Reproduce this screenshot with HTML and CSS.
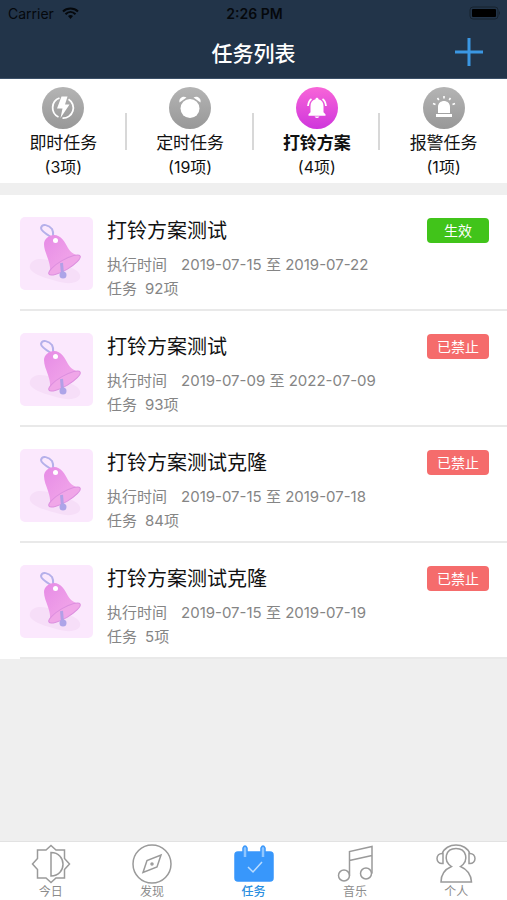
FILE: index.html
```html
<!DOCTYPE html>
<html lang="zh-CN">
<head>
<meta charset="utf-8">
<meta name="viewport" content="width=device-width, initial-scale=1">
<title>任务列表</title>
<link rel="stylesheet" href="styles.css">
</head>
<body>
<svg class="defs" aria-hidden="true">
  <defs>
    <linearGradient id="gray" x1="0" y1="0" x2="0" y2="1"><stop offset="0" stop-color="#b4b4b4"/><stop offset="1" stop-color="#989898"/></linearGradient>
    <linearGradient id="pink" x1="0" y1="0" x2="0" y2="1"><stop offset="0" stop-color="#f865d8"/><stop offset="1" stop-color="#cf36dc"/></linearGradient>
    <linearGradient id="bellfill" x1="0" y1="0" x2="1" y2="1"><stop offset="0" stop-color="#e68be6"/><stop offset="1" stop-color="#f5aeea"/></linearGradient>
    <symbol id="bell" viewBox="0 0 73 73">
      <path d="M10 48c3-8 14-7 24-3s24 6 26 13-9 10-20 7S7 57 10 48z" fill="#f6def8"/>
      <path d="M31 20c-5-3-10-6-10-9 1-5 8-3 11 1 2 4 1 6 1 8" fill="none" stroke="#b5b0ea" stroke-width="2"/>
      <path d="M24 27c0-5 5-9 10-9 7 0 11 7 14 13 3 5 7 7 12 8-2 6-8 10-15 13.500S31 57.500 29 57c2-4 1-9-1-15s-4-10-4-15z" fill="url(#bellfill)"/>
      <ellipse cx="44.500" cy="48" rx="18" ry="5" transform="rotate(-30 44.500 48)" fill="#f0a6e8" stroke="#dc8fdf"/>
      <path d="M41.500 46l1 11" stroke="#b29fe6" stroke-width="3"/>
      <circle cx="43" cy="58" r="3.500" fill="#ada4e8"/>
      <circle cx="35.500" cy="23.500" r="2.500" fill="#fff"/>
    </symbol>
  </defs>
</svg>

<header class="header">
  <div class="status">
    <span class="carrier">Carrier
      <svg width="17" height="12" viewBox="0 0 17 12" fill="none" stroke="#05080c" stroke-width="2"><path d="M1 4.500c4-4 11-4 15 0M3.500 7.300c3-3 7-3 10 0"/><path d="M6 9c1.500-1.300 3.500-1.300 5 0l-2.500 3z" fill="#05080c" stroke="none"/></svg>
    </span>
    <span class="clock">2:26 PM</span>
    <svg class="battery" width="32" height="14" viewBox="0 0 32 14"><rect x="1" y="1" width="28" height="12" rx="3" fill="none" stroke="#17232f"/><rect x="3" y="3" width="24" height="8" rx="1" fill="#000"/><path d="M30 5q2 2 0 4z" fill="#17232f"/></svg>
  </div>
  <div class="titlebar">
    <h1 class="title">任务列表</h1>
    <button class="add" type="button" aria-label="新增任务"><svg width="28" height="28" viewBox="0 0 28 28"><path d="M14 0v28M0 14h28" stroke="#3b97e3" stroke-width="3"/></svg></button>
  </div>
</header>

<nav class="kinds" aria-label="任务类型">
  <button class="kind" type="button">
    <svg class="kind-icon" viewBox="0 0 42 42"><circle cx="21" cy="21" r="21" fill="url(#gray)"/><path d="M17.500 11a10.300 10.300 0 0 0-1 19M26.500 12.200a10.300 10.300 0 0 1-6 19" fill="none" stroke="#fff" stroke-width="1.800"/><path d="M19.500 9.500h6l-2.500 8h4.500L18.500 31l2-9.500h-5.500z" fill="#fff"/></svg>
    <span class="kind-name">即时任务</span><span class="kind-count">(3项)</span>
  </button>
  <button class="kind" type="button">
    <svg class="kind-icon" viewBox="0 0 42 42"><circle cx="21" cy="21" r="21" fill="url(#gray)"/><circle cx="21" cy="21.500" r="9.500" fill="#fff"/><path d="M10.500 15.500c-1-4 3-7 7-5zM31.500 15.500c1-4-3-7-7-5z" fill="#fff"/></svg>
    <span class="kind-name">定时任务</span><span class="kind-count">(19项)</span>
  </button>
  <button class="kind active" type="button" aria-current="true">
    <svg class="kind-icon" viewBox="0 0 42 42"><circle cx="21" cy="21" r="21" fill="url(#pink)"/><path d="M19.500 12.200c0-2 3-2 3 0 3.500 1 5 3.500 5 7v6l2 2v1.500h-17v-1.500l2-2v-6c0-3.500 1.500-6 5-7z" fill="#fff"/><path d="M18.500 29.500h5q-2.500 3-5 0z" fill="#fff"/><path d="M15.500 12q-3 2-3.500 7M26.500 12q3 2 3.500 7" fill="none" stroke="#fff" stroke-width="1.800"/></svg>
    <span class="kind-name">打铃方案</span><span class="kind-count">(4项)</span>
  </button>
  <button class="kind" type="button">
    <svg class="kind-icon" viewBox="0 0 42 42"><circle cx="21" cy="21" r="21" fill="url(#gray)"/><path d="M15 26v-6c0-8 12-8 12 0v6zM13 27h16v3H13z" fill="#fff"/><path d="M21 9v2.500M14.500 11l1.300 2M27.500 11l-1.300 2M10 16.500l2.500 1M32 16.500l-2.500 1" stroke="#fff" stroke-width="1.600"/></svg>
    <span class="kind-name">报警任务</span><span class="kind-count">(1项)</span>
  </button>
</nav>

<main>
  <ul class="plans">
    <li class="plan">
      <svg class="thumb"><use href="#bell"/></svg>
      <div class="info">
        <h2 class="plan-name">打铃方案测试</h2>
        <p class="meta"><span class="label">执行时间</span>2019-07-15 至 2019-07-22</p>
        <p class="meta"><span class="label short">任务</span>92项</p>
      </div>
      <span class="badge on">生效</span>
    </li>
    <li class="plan">
      <svg class="thumb"><use href="#bell"/></svg>
      <div class="info">
        <h2 class="plan-name">打铃方案测试</h2>
        <p class="meta"><span class="label">执行时间</span>2019-07-09 至 2022-07-09</p>
        <p class="meta"><span class="label short">任务</span>93项</p>
      </div>
      <span class="badge">已禁止</span>
    </li>
    <li class="plan">
      <svg class="thumb"><use href="#bell"/></svg>
      <div class="info">
        <h2 class="plan-name">打铃方案测试克隆</h2>
        <p class="meta"><span class="label">执行时间</span>2019-07-15 至 2019-07-18</p>
        <p class="meta"><span class="label short">任务</span>84项</p>
      </div>
      <span class="badge">已禁止</span>
    </li>
    <li class="plan">
      <svg class="thumb"><use href="#bell"/></svg>
      <div class="info">
        <h2 class="plan-name">打铃方案测试克隆</h2>
        <p class="meta"><span class="label">执行时间</span>2019-07-15 至 2019-07-19</p>
        <p class="meta"><span class="label short">任务</span>5项</p>
      </div>
      <span class="badge">已禁止</span>
    </li>
  </ul>
</main>

<nav class="tabbar" aria-label="主导航">
  <a class="tab" href="#today">
    <svg class="tab-icon" viewBox="0 0 40 40"><path d="M20 1.500l5 4.500h8.500v8.500l5 5.500-5 5.500V34H25l-5 4.500-5-4.500H6.500v-8.500l-5-5.500 5-5.500V6H15z"/><path d="M20 8.500c16 0 16 23.500 0 23.500z"/></svg>今日</a>
  <a class="tab" href="#discover">
    <svg class="tab-icon" viewBox="0 0 40 40"><circle cx="20" cy="20" r="19"/><path d="M29 11l-4 12-14 5.500 4-12z"/><circle cx="20" cy="20" r="1"/></svg>发现</a>
  <a class="tab active" href="#tasks" aria-current="page">
    <svg class="tab-icon" viewBox="0 0 40 40"><rect x="1" y="8" width="38" height="29" rx="3" fill="#3897fb" stroke="#3897fb"/><path d="M9 13V4q2-4 4 0v9M27 13V4q2-4 4 0v9" fill="#8fc6ff" stroke="#3897fb"/><path d="M14 23l5 5 9-10" stroke="#b9dcff"/></svg>任务</a>
  <a class="tab" href="#music">
    <svg class="tab-icon" viewBox="0 0 40 40"><circle cx="9" cy="31.500" r="5.500"/><circle cx="31" cy="29.500" r="5.500"/><path d="M14.500 31.500V7.500L37 2.500v27M14.500 16.500L37 11.500"/></svg>音乐</a>
  <a class="tab" href="#me">
    <svg class="tab-icon" viewBox="0 0 40 40"><path d="M15.500 22.500c-9-6-6-18 4.500-18s13.500 12 4.500 18c7 3 10.500 8 11 15.500H5c0-8 3.500-12.500 10.500-15.500z"/><path d="M6 10C10-2 30-2 34 10M7 9.500v10c-8 1-8-11 0-10zM33 9.500v10c8 1 8-11 0-10z"/></svg>个人</a>
</nav>
</body>
</html>
```

FILE: styles.css
```css
* {
  box-sizing: border-box;
}

body {
  margin: 0;
  min-height: 100vh;
  display: flex;
  flex-direction: column;
  background: #efefef;
  color: #111;
  font-family: Inter, "Noto Sans CJK SC", sans-serif;
}

h1, h2, p, ul {
  margin: 0;
  padding: 0;
}

button {
  padding: 0;
  border: 0;
  background: none;
  color: inherit;
  font: inherit;
}

.defs {
  position: absolute;
  width: 0;
  height: 0;
}

.header {
  background: #223449;
  border-bottom: 1px solid #3c5068;
}

.status {
  display: grid;
  grid-template-columns: 1fr auto 1fr;
  align-items: center;
  height: 26px;
  padding: 0 6px 0 8px;
  color: #05080c;
  font-size: 14px;
}

.carrier {
  display: flex;
  align-items: center;
  gap: 8px;
}

.clock {
  font-weight: 600;
}

.battery {
  justify-self: end;
}

.titlebar {
  display: grid;
  grid-template-columns: 1fr auto 1fr;
  align-items: center;
  height: 52px;
  padding: 0 24px;
}

.title {
  grid-column: 2;
  color: #fff;
  font-size: 21px;
  font-weight: 500;
}

.add {
  display: flex;
  justify-self: end;
}

.kinds {
  display: flex;
  padding: 8px 0 4px;
  background: #fff;
  border-bottom: 12px solid #efefef;
}

.kind {
  flex: 1;
  display: flex;
  flex-direction: column;
  align-items: center;
  height: 92px;
  line-height: 24px;
  background: linear-gradient(#d8d8d8, #d8d8d8) right 26px / 2px 37px no-repeat;
}

.kind:last-child {
  background: none;
}

.kind-icon {
  flex: none;
  width: 42px;
  height: 42px;
}

.kind-name {
  margin-top: 2px;
  font-size: 17px;
}

.kind-count {
  font-size: 16px;
}

.kind.active .kind-name {
  font-weight: 700;
}

.plans {
  list-style: none;
  background: #fff;
}

.plan {
  display: flex;
  align-items: flex-start;
  gap: 14px;
  height: 116px;
  margin-left: 20px;
  padding: 22px 18px 0 0;
  border-bottom: 2px solid #e9e9e9;
}

.thumb {
  width: 73px;
  height: 73px;
  border-radius: 5px;
  background: #fbe8fd;
}

.info {
  flex: 1;
  padding-top: 1px;
}

.plan-name {
  margin-bottom: 8px;
  font-size: 20px;
  font-weight: 400;
  line-height: 27px;
}

.meta {
  color: #858585;
  font-size: 15px;
  line-height: 24px;
}

.label {
  margin-right: 14px;
}

.label.short {
  margin-right: 8px;
}

.badge {
  width: 62px;
  margin-top: 1px;
  border-radius: 4px;
  background: #f56c6c;
  color: #fff;
  font-size: 14px;
  line-height: 25px;
  text-align: center;
}

.badge.on {
  background: #41c41a;
}

.tabbar {
  display: flex;
  margin-top: auto;
  padding: 2px 0 0;
  border-top: 1px solid #e2e2e2;
  background: #fff;
}

.tab {
  flex: 1;
  display: flex;
  flex-direction: column;
  align-items: center;
  color: #8c8c8c;
  font-size: 12px;
  line-height: 16px;
  text-decoration: none;
}

.tab-icon {
  width: 40px;
  height: 40px;
  fill: none;
  stroke: #9a9a9a;
  stroke-width: 1.5px;
}

.tab.active {
  color: #2b8fe0;
  font-weight: 500;
}
```
